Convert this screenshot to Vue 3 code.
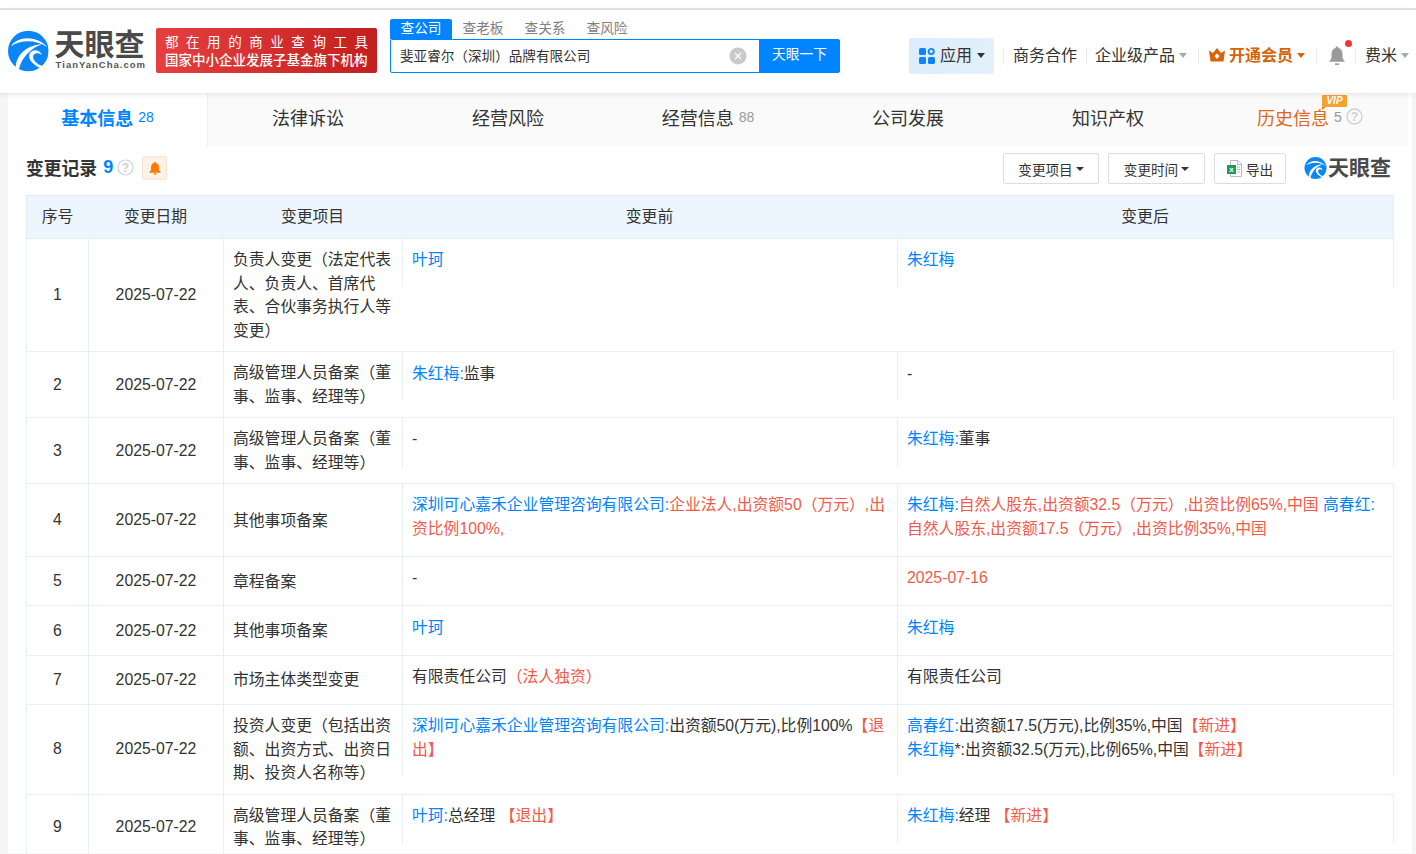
<script setup>
const tabs = [
  { label: '基本信息', count: '28', active: true },
  { label: '法律诉讼' },
  { label: '经营风险' },
  { label: '经营信息', count: '88' },
  { label: '公司发展' },
  { label: '知识产权' },
  { label: '历史信息', count: '5', vip: true }
]
const searchTabs = ['查公司', '查老板', '查关系', '查风险']
const B = t => ({ c: 'blue', t })
const R = t => ({ c: 'red', t })
const T = t => ({ c: '', t })
const rows = [
  { item: '负责人变更（法定代表人、负责人、首席代表、合伙事务执行人等变更）', before: [B('叶珂')], after: [B('朱红梅')] },
  { item: '高级管理人员备案（董事、监事、经理等）', before: [B('朱红梅:'), T('监事')], after: [T('-')] },
  { item: '高级管理人员备案（董事、监事、经理等）', before: [T('-')], after: [B('朱红梅:'), T('董事')] },
  { item: '其他事项备案', before: [B('深圳可心嘉禾企业管理咨询有限公司:'), R('企业法人,出资额50（万元）,出资比例100%,')], after: [B('朱红梅:'), R('自然人股东,出资额32.5（万元）,出资比例65%,中国 '), B('高春红:'), R('自然人股东,出资额17.5（万元）,出资比例35%,中国')] },
  { item: '章程备案', before: [T('-')], after: [R('2025-07-16')] },
  { item: '其他事项备案', before: [B('叶珂')], after: [B('朱红梅')] },
  { item: '市场主体类型变更', before: [T('有限责任公司'), R('（法人独资）')], after: [T('有限责任公司')] },
  { item: '投资人变更（包括出资额、出资方式、出资日期、投资人名称等）', before: [B('深圳可心嘉禾企业管理咨询有限公司:'), T('出资额50(万元),比例100%'), R('【退出】')], after: [B('高春红:'), T('出资额17.5(万元),比例35%,中国'), R('【新进】'), { br: true }, B('朱红梅'), T('*:出资额32.5(万元),比例65%,中国'), R('【新进】')] },
  { item: '高级管理人员备案（董事、监事、经理等）', before: [B('叶珂:'), T('总经理 '), R('【退出】')], after: [B('朱红梅:'), T('经理 '), R('【新进】')] }
]
</script>

<template>
  <div class="page">
    <svg width="0" height="0" class="defs">
      <symbol id="swirl" viewBox="0 0 42 42">
        <circle cx="21" cy="21" r="21" fill="#0a86f7" />
        <path d="M3 16C10 6 28 4 41 17C28 9 14 9 3 16Z" fill="#fff" />
        <path d="M8 39C8 26 18 15 35 14C24 18 14 27 11 41Z" fill="#fff" />
        <path d="M34 39C25 35 19 28 23 22.500C27 18.500 33 20 35 25C31 22 26 23 26 27C26 31 30 35 37 37Z" fill="#fff" />
      </symbol>
    </svg>

    <div class="topline"></div>
    <header class="header">
      <div class="logo">
        <svg class="logo-mark"><use href="#swirl" /></svg>
        <div class="logo-text">
          <div class="logo-cn">天眼查</div>
          <div class="logo-en">TianYanCha.com</div>
        </div>
      </div>
      <div class="banner">
        <div class="banner-one">都在用的商业查询工具</div>
        <div class="banner-two">国家中小企业发展子基金旗下机构</div>
      </div>
      <div class="search">
        <div class="search-tabs">
          <span v-for="(s, i) in searchTabs" :key="s" class="search-tab" :class="{ on: i === 0 }">{{ s }}</span>
        </div>
        <div class="search-box">
          <div class="search-input">斐亚睿尔（深圳）品牌有限公司</div>
          <svg class="clear" width="18" height="18" viewBox="0 0 18 18">
            <circle cx="9" cy="9" r="8.500" fill="#c9c9c9" />
            <path d="M6 6l6 6M12 6l-6 6" stroke="#fff" stroke-width="1.300" />
          </svg>
          <div class="search-btn">天眼一下</div>
        </div>
      </div>
      <nav class="nav">
        <div class="apps">
          <svg width="16" height="16" viewBox="0 0 16 16">
            <rect x="0" y="0" width="7" height="7" rx="1.600" fill="#0a84ff" />
            <circle cx="12.200" cy="3.500" r="2.600" fill="none" stroke="#0a84ff" stroke-width="1.800" />
            <rect x="0" y="9" width="7" height="7" rx="1.600" fill="#0a84ff" />
            <rect x="9" y="9" width="7" height="7" rx="1.600" fill="#0a84ff" />
          </svg>
          <span>应用</span>
          <i class="caret dark"></i>
        </div>
        <i class="sep first"></i>
        <span class="nav-item">商务合作</span>
        <i class="sep"></i>
        <span class="nav-item">企业级产品</span>
        <i class="caret grey gap4"></i>
        <i class="sep wide"></i>
        <svg class="crown" width="16" height="14" viewBox="0 0 16 14">
          <path d="M0 2.500L4 5 8 0l4 5 4-2.500-1.500 11H1.500Z" fill="#d4650a" />
          <path d="M8 5.500L10.500 8 8 11 5.500 8Z" fill="#fff" />
        </svg>
        <span class="nav-item vip">开通会员</span>
        <i class="caret orange gap4"></i>
        <i class="sep wide"></i>
        <span class="bell-wrap">
          <svg width="18" height="20" viewBox="0 0 17 19">
            <path d="M8.500 0.500c.8 0 1.300.6 1.300 1.300 2.700.7 3.900 3 3.900 5.700v4l2.300 3.500H1l2.300-3.500v-4c0-2.700 1.200-5 3.900-5.700 0-.7.500-1.300 1.300-1.300Z" fill="#9a9a9a" />
            <path d="M6.500 16.500h4v1.500h-4Z" fill="#9a9a9a" />
          </svg>
          <i class="dot"></i>
        </span>
        <i class="sep user"></i>
        <span class="nav-item">费米</span>
        <i class="caret grey gap4"></i>
      </nav>
    </header>

    <main class="main">
      <div class="tabs">
        <div v-for="t in tabs" :key="t.label" class="tab" :class="{ active: t.active, hist: t.vip }">
          <span class="tab-label">{{ t.label }}</span>
          <span v-if="t.count" class="tab-count">{{ t.count }}</span>
          <svg v-if="t.vip" class="help tabhelp" width="17" height="17" viewBox="0 0 17 17">
            <circle cx="8.500" cy="8.500" r="7.500" fill="none" stroke="#cfcfcf" stroke-width="1.300" />
            <text x="8.500" y="12.500" text-anchor="middle" class="help-q">?</text>
          </svg>
          <span v-if="t.vip" class="vip-badge">VIP</span>
        </div>
      </div>

      <section class="section">
        <div class="title-row">
          <h2 class="title">变更记录</h2>
          <span class="title-count">9</span>
          <svg class="help title-help" width="17" height="17" viewBox="0 0 17 17">
            <circle cx="8.500" cy="8.500" r="7.500" fill="none" stroke="#c9d1dc" stroke-width="1.200" />
            <text x="8.500" y="12.500" text-anchor="middle" class="help-q">?</text>
          </svg>
          <span class="bell-btn">
            <svg width="12" height="13" viewBox="0 0 12 13">
              <path d="M6 0c.7 0 1 .4 1 1 2 .5 3 2.300 3 4.300v2.700L12 10.700H0L2 8V5.300C2 3.300 3 1.500 5 1c0-.6.3-1 1-1Z" fill="#ff7a00" />
              <path d="M4.500 11.300h3a1.500 1.500 0 0 1-3 0Z" fill="#ff7a00" />
            </svg>
          </span>
          <div class="tools">
            <div class="tool t1">变更项目<i class="caret dark small"></i></div>
            <div class="tool t2">变更时间<i class="caret dark small"></i></div>
            <div class="tool t3">
              <svg width="15" height="17" viewBox="0 0 15 17">
                <path d="M3.500.5H11L14.500 4V16.500H3.500Z" fill="#fff" stroke="#bcbcbc" />
                <path d="M10.500.5V4.500H14.500" fill="none" stroke="#bcbcbc" />
                <path d="M10 7h3M10 9.500h3M10 12h3" stroke="#bcbcbc" />
                <rect x="0" y="5" width="9" height="9" fill="#1f9d55" />
                <text x="4.500" y="12.300" text-anchor="middle" class="xl">x</text>
              </svg>
              <span>导出</span>
            </div>
            <div class="mini-logo">
              <svg class="mini-mark"><use href="#swirl" /></svg>
              <span>天眼查</span>
            </div>
          </div>
        </div>

        <table class="table">
          <colgroup>
            <col class="c1" /><col class="c2" /><col class="c3" /><col class="c4" /><col class="c5" />
          </colgroup>
          <thead>
            <tr>
              <th>序号</th><th>变更日期</th><th>变更项目</th><th>变更前</th><th>变更后</th>
            </tr>
          </thead>
          <tbody>
            <tr v-for="(r, i) in rows" :key="i">
              <td class="mid">{{ i + 1 }}</td>
              <td class="mid">2025-07-22</td>
              <td class="item">{{ r.item }}</td>
              <td colspan="2" class="pair-cell">
                <div class="pair">
                  <div class="side">
                    <template v-for="(p, j) in r.before" :key="j"><span :class="p.c">{{ p.t }}</span></template>
                  </div>
                  <div class="side last">
                    <template v-for="(p, j) in r.after" :key="j"><br v-if="p.br" /><span v-else :class="p.c">{{ p.t }}</span></template>
                  </div>
                </div>
              </td>
            </tr>
          </tbody>
        </table>
      </section>
    </main>
  </div>
</template>

<style>
html, body { margin: 0; background: #f5f5f5; overflow: hidden; height: 854px; }
</style>

<style scoped>
.page {
  width: 1416px;
  height: 854px;
  overflow: hidden;
  font-family: "Liberation Sans", "Noto Sans CJK SC", sans-serif;
  color: #333;
  background: #f5f5f5;
}
.defs { position: absolute; }
.topline { height: 8px; background: #fff; border-bottom: 2px solid #e6e6e6; }
.header {
  height: 83px;
  background: #fff;
  box-shadow: 0 1px 6px rgba(0, 0, 0, .1);
  display: flex;
  position: relative;
  z-index: 2;
  padding-left: 8px;
}
.logo { display: flex; width: 138px; padding-top: 20px; height: 42px; }
.logo-mark { width: 42px; height: 42px; }
.logo-text { margin-left: 6px; }
.logo-cn { font-size: 30px; line-height: 30px; font-weight: 700; color: #4a4a4a; }
.logo-en { font-size: 9.500px; line-height: 12px; font-weight: 700; color: #555; letter-spacing: 1px; margin-top: -1px; margin-left: 1px; white-space: nowrap; }
.banner {
  margin: 18px 0 0 10px;
  width: 221px;
  height: 45px;
  box-sizing: border-box;
  padding: 6px 9px 0;
  border-radius: 2px;
  background: linear-gradient(90deg, #e5403f, #c41f1f);
  color: #fff;
  line-height: 18px;
}
.banner-one { text-align: justify; text-align-last: justify; font-size: 13.500px; }
.banner-two { font-size: 13.500px; font-weight: 500; white-space: nowrap; }
.search { width: 450px; margin: 9px 0 0 13px; }
.search-tabs { display: flex; height: 20px; gap: 20px; }
.search-tab { width: 42px; text-align: center; font-size: 13.700px; line-height: 20px; color: #808080; }
.search-tab.on { width: 62px; margin-right: -10px; background: #0084ff; color: #fff; border-radius: 2px 2px 0 0; }
.search-box {
  height: 34px;
  box-sizing: border-box;
  border: 1px solid #0084ff;
  border-radius: 2px;
  display: flex;
  align-items: center;
  background: #fff;
}
.search-input { flex: 1; padding: 0 0 2px 9px; font-size: 13.600px; color: #333; }
.clear { margin-right: 12px; }
.search-btn { width: 81px; height: 32px; margin-right: -1px; background: #0084ff; color: #fff; font-size: 13.700px; line-height: 30px; text-align: center; }
.nav { display: flex; align-items: center; height: 36px; margin: 28px 0 0 69px; }
.apps {
  width: 85px;
  height: 36px;
  box-sizing: border-box;
  padding-left: 10px;
  border-radius: 3px;
  background: linear-gradient(135deg, #dcecfd, #e4f0fb);
  display: flex;
  align-items: center;
  font-size: 16px;
}
.apps span { margin: 0 5px; padding-bottom: 5px; }
.apps svg { margin-bottom: 1px; }
.caret { display: inline-block; width: 0; height: 0; border-left: 4.500px solid transparent; border-right: 4.500px solid transparent; border-top: 5px solid #999; }
.nav .caret { margin-bottom: 2px; }
.caret.dark { border-top-color: #333; }
.caret.grey { border-top-color: #aaa; }
.caret.orange { border-top-color: #d4650a; }
.caret.small { border-left-width: 4px; border-right-width: 4px; border-top-width: 4px; margin-left: 3px; }
.gap4 { margin-left: 4px; }
.sep { width: 1px; height: 14px; background: #e8e8e8; margin: 0 9px; }
.sep.first { margin: 0 9px; }
.nav-item + .sep { margin-right: 8px; }
.sep.wide { margin: 0 10px 0 11px; }
.sep.user { margin: 0 9px 0 9px; }
.nav-item { font-size: 16px; white-space: nowrap; padding-bottom: 5px; }
.nav-item.vip { color: #d4650a; font-weight: 700; }
.crown { margin: 0 4px 3px 0; }
.bell-wrap { position: relative; display: flex; margin-left: 1px; }
.dot { position: absolute; width: 7px; height: 7px; border-radius: 50%; background: #f5353a; left: 17px; top: -6px; }
.main { margin-left: 8px; width: 1404px; height: 760px; background: #fff; }
.tabs { display: flex; height: 53px; background: #fafafa; padding-top: 1px; width: 1400px; }
.tab {
  width: 200px;
  box-sizing: border-box;
  padding-bottom: 8px;
  display: flex;
  align-items: center;
  justify-content: center;
  font-size: 18px;
  position: relative;
}
.tab.active { color: #0084ff; background: #fff; font-weight: 700; border-right: 1px solid #f0f0f0; }
.tab.hist { color: #e0681c; padding-left: 4px; }
.tab-count { font-size: 14px; font-weight: 400; margin-left: 5px; color: #999; }
.tab.active .tab-count { color: #0084ff; }
.tabhelp { margin-left: 4px; }
.help-q { font: 700 12px "Liberation Sans", sans-serif; fill: #cfcfcf; }
.vip-badge {
  position: absolute;
  left: 114px;
  top: 1px;
  width: 25px;
  height: 12px;
  background: #f6a233;
  color: #fff;
  font-size: 10px;
  font-style: italic;
  font-weight: 700;
  line-height: 12px;
  text-align: center;
  border-radius: 1px;
}
.vip-badge::after {
  content: "";
  position: absolute;
  left: 0;
  bottom: -3px;
  border-top: 3px solid #e08a1f;
  border-right: 4px solid transparent;
}
.section { padding: 0 18px; }
.title-row { display: flex; align-items: center; height: 48px; box-sizing: border-box; padding-bottom: 8px; position: relative; }
.title { font-size: 17.800px; font-weight: 700; margin: 0; color: #333; }
.title-count { font-size: 18px; font-weight: 700; color: #0084ff; margin-left: 6px; }
.title-help { margin-left: 4px; }
.bell-btn {
  width: 25px;
  height: 24px;
  box-sizing: border-box;
  margin-left: 8px;
  margin-top: 2px;
  background: #fff3e9;
  border: 1px solid #fde3cf;
  border-radius: 2px;
  display: flex;
  align-items: center;
  justify-content: center;
}
.tools { margin-left: auto; display: flex; align-items: center; gap: 9px; margin-right: 3px; margin-top: 3px; }
.tool {
  height: 31px;
  box-sizing: border-box;
  border: 1px solid #ddd;
  border-radius: 2px;
  font-size: 13.600px;
  display: flex;
  align-items: center;
  justify-content: center;
}
.t1 { width: 96px; }
.t2 { width: 97px; }
.t3 { width: 72px; }
.t3 span { margin-left: 4px; }
.xl { font: 700 8px "Liberation Sans", sans-serif; fill: #fff; }
.mini-logo { display: flex; align-items: center; margin-left: 9px; font-size: 21px; font-weight: 700; color: #4a4a4a; line-height: 24px; margin-top: -1px; }
.mini-mark { width: 23px; height: 22px; margin-right: 1px; }
.table {
  table-layout: fixed;
  width: 1368px;
  border-collapse: separate;
  border-spacing: 0;
  font-size: 15.800px;
  line-height: 23.700px;
}
.c1 { width: 62px; }
.c2 { width: 135px; }
.c3 { width: 179px; }
.c4 { width: 495px; }
.c5 { width: 497px; }
th {
  height: 42px;
  padding: 0;
  font-weight: 400;
  background: #edf5fe;
  border-top: 1px solid #e4ecf4;
  border-bottom: 1px solid #e4ecf4;
  box-sizing: content-box;
}
th:first-child { border-left: 1px solid #e4ecf4; }
th:last-child { border-right: 1px solid #e4ecf4; }
td { padding: 0; border-bottom: 1px solid #e8eef5; border-left: 1px solid #e8eef5; vertical-align: top; }
td.mid { text-align: center; vertical-align: middle; }
td.item { padding: 9px 9px 8.500px; vertical-align: middle; }
td.pair-cell { border-left: 0; }
.pair { display: flex; }
.side {
  width: 495px;
  box-sizing: border-box;
  padding: 9.200px 9px 15.400px;
  border-left: 1px solid #e8eef5;
}
.side.last { width: 497px; border-right: 1px solid #e8eef5; }
.blue { color: #0084ff; }
.red { color: #f25a4a; }
</style>
